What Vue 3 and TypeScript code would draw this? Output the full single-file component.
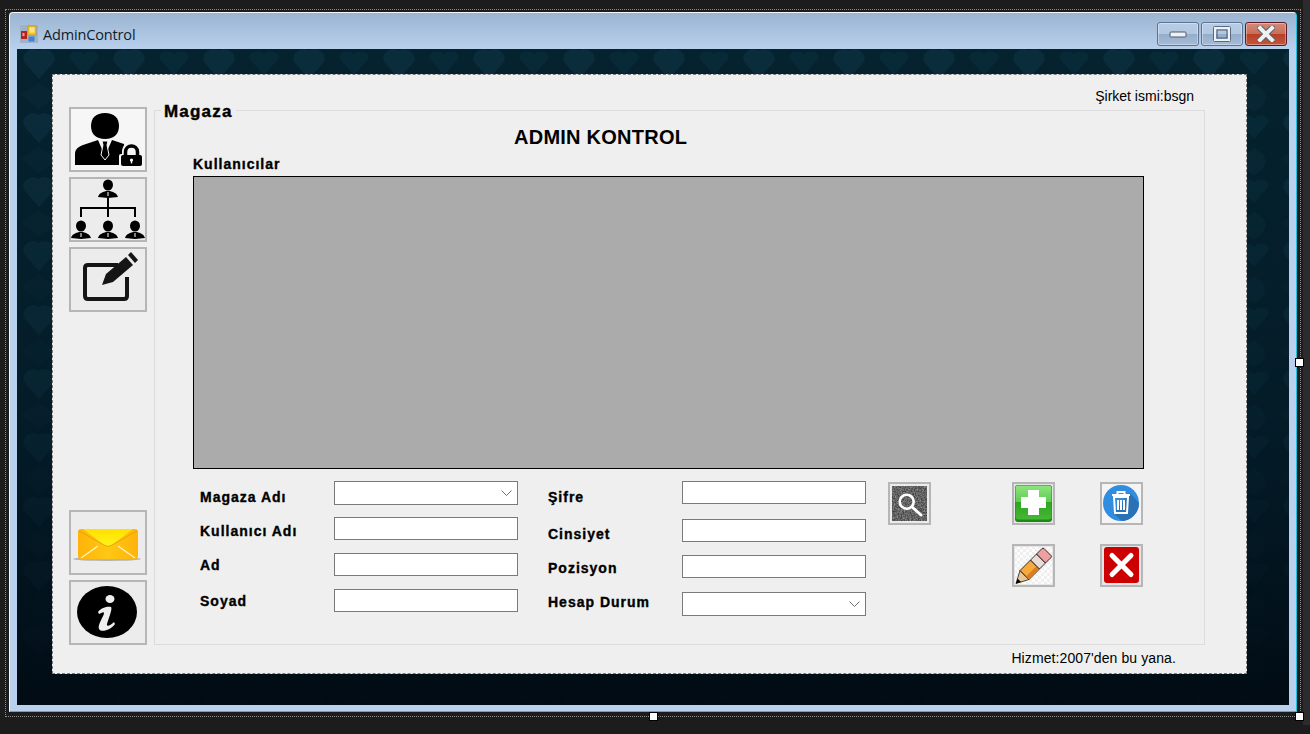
<script setup lang="ts">
interface Field {
  label: string
  combo?: boolean
  gap: number
  labelTop: number
  height: number
}

const leftFields: Field[] = [
  { label: 'Magaza Adı', combo: true, gap: 0, labelTop: 8, height: 24 },
  { label: 'Kullanıcı Adı', gap: 12, labelTop: 6, height: 23 },
  { label: 'Ad', gap: 13, labelTop: 4, height: 23 },
  { label: 'Soyad', gap: 13, labelTop: 4, height: 23 },
]

const rightFields: Field[] = [
  { label: 'Şifre', gap: 0, labelTop: 8, height: 23 },
  { label: 'Cinsiyet', gap: 14, labelTop: 7, height: 23 },
  { label: 'Pozisyon', gap: 13, labelTop: 5, height: 23 },
  { label: 'Hesap Durum', combo: true, gap: 14, labelTop: 2, height: 24 },
]

const columns = [leftFields, rightFields]
</script>

<template>
  <div class="screen">
    <div class="surface">
      <div class="frame">
        <div class="window">
          <div class="titlebar">
            <svg class="app-icon" width="18" height="18" viewBox="0 0 18 18">
              <rect width="18" height="18" fill="#9fb2c8" />
              <rect x="1" y="6" width="6" height="8" fill="#b3241c" />
              <rect x="2.500" y="8" width="2" height="3" fill="#e8a0a0" />
              <rect x="8" y="1" width="8" height="9" fill="#f4c430" stroke="#b98a10" stroke-width="0.6" />
              <rect x="9.500" y="2.500" width="5" height="5" fill="#fbe690" />
              <rect x="8.500" y="11.500" width="6" height="5" fill="#3f82d8" />
            </svg>
            <span class="app-title">AdminControl</span>
            <div class="caption">
              <div class="cap-btn">
                <svg width="18" height="8" viewBox="0 0 18 8"><rect x="1" y="2" width="16" height="5" rx="1" fill="#eef1f5" stroke="#4a5a70" /></svg>
              </div>
              <div class="cap-btn">
                <svg width="18" height="16" viewBox="0 0 18 16"><rect x="1.500" y="1.500" width="15" height="13" rx="1" fill="none" stroke="#eef1f5" stroke-width="3" /><rect x="4" y="4" width="10" height="8" fill="none" stroke="#4a5a70" /><rect x="0.500" y="0.500" width="17" height="15" rx="1" fill="none" stroke="#5a6a80" /></svg>
              </div>
              <div class="cap-btn close">
                <svg width="18" height="16" viewBox="0 0 18 16"><path d="M3 2 L15 14 M15 2 L3 14" stroke="#55606a" stroke-width="6" stroke-linecap="square" /><path d="M3 2 L15 14 M15 2 L3 14" stroke="#eef0f2" stroke-width="4" stroke-linecap="square" /></svg>
              </div>
            </div>
          </div>

          <div class="client">
            <svg class="wallpaper" width="1272" height="656">
              <defs>
                <pattern id="hearts" width="90" height="64" patternUnits="userSpaceOnUse">
                  <path d="M22 2 C30 -4 42 6 36 14 L22 30 L8 14 C2 6 14 -4 22 2Z" fill="#2a6f90" opacity="0.14" />
                  <path d="M67 26 L53 10 C50 4 62 -1 67 6 C72 -1 84 4 81 10Z" fill="#2a6f90" opacity="0.1" />
                  <path d="M22 60 L4 46 L22 34 L40 46Z" fill="#2a6f90" opacity="0.05" />
                  <path d="M67 62 C58 58 52 50 58 42 C62 38 65 38 67 34 C69 38 72 38 76 42 C82 50 76 58 67 62Z" fill="#2a6f90" opacity="0.07" />
                </pattern>
                <linearGradient id="fade" x1="0" y1="0" x2="0" y2="1">
                  <stop offset="0" stop-color="#01111c" stop-opacity="0" />
                  <stop offset="0.55" stop-color="#01111c" stop-opacity="0.35" />
                  <stop offset="1" stop-color="#010a12" stop-opacity="0.95" />
                </linearGradient>
              </defs>
              <rect width="1272" height="656" fill="#05222f" />
              <rect width="1272" height="656" fill="url(#hearts)" />
              <rect width="1272" height="656" fill="url(#fade)" />
            </svg>

            <div class="panel">
              <div class="company">Şirket ismi:bsgn</div>

              <div class="main">
                <div class="sidebar">
                  <div class="side-group">
                    <div class="side-btn light">
                      <svg width="74" height="61" viewBox="2 2 74 61">
                        <path d="M36 6 C45 6 50 11 50 19 C50 27 45 32 36 32 C27 32 22 27 22 19 C22 11 27 6 36 6Z" fill="#000" />
                        <path d="M6 58 V47 C6 41 11 39 17 37 L29 33 L36 49 L43 33 L55 37 L57 58Z" fill="#000" />
                        <path d="M33 34 H39 L38 38 L40 48 L36 53 L32 48 L34 38Z" fill="#000" stroke="#f6f6f6" stroke-width="1" />
                        <rect x="50" y="47" width="25" height="15" rx="2" fill="#f6f6f6" />
                        <path d="M56 48 V45 C56 35 70 35 70 45 V48" fill="none" stroke="#f6f6f6" stroke-width="6" />
                        <path d="M56.500 49 V45 C56.500 37 68.500 37 68.500 45 V49" fill="none" stroke="#000" stroke-width="3.500" />
                        <rect x="52" y="48" width="21" height="11" rx="2" fill="#000" />
                        <circle cx="62.500" cy="53" r="1.600" fill="#fff" />
                        <rect x="61.800" y="53" width="1.400" height="3.400" fill="#fff" />
                      </svg>
                    </div>
                    <div class="side-btn">
                      <svg width="74" height="61" viewBox="2 2 74 61">
                        <path d="M39 21 V40 M12 40 V31 H66 V40" fill="none" stroke="#000" stroke-width="2" />
                        <g v-for="p in [[39, 8], [12, 49], [39, 49], [66, 49]]" :key="p.join()">
                          <ellipse :cx="p[0]" :cy="p[1]" rx="5" ry="5.500" fill="#000" />
                          <path :d="`M${p[0] - 10} ${p[1] + 12} C${p[0] - 9} ${p[1] + 8} ${p[0] - 5} ${p[1] + 7} ${p[0] - 2} ${p[1] + 6} H${p[0] + 2} C${p[0] + 5} ${p[1] + 7} ${p[0] + 9} ${p[1] + 8} ${p[0] + 10} ${p[1] + 12} L${p[0]} ${p[1] + 13}Z`" fill="#000" />
                          <path :d="`M${p[0] - 0.6} ${p[1] + 7} H${p[0] + 0.6} V${p[1] + 11} H${p[0] - 0.6}Z`" fill="#d8d8d8" />
                        </g>
                      </svg>
                    </div>
                    <div class="side-btn">
                      <svg width="74" height="61" viewBox="2 2 74 61">
                        <path d="M49 18 H19 Q16 18 16 21 V49 Q16 52 19 52 H55 Q58 52 58 49 V30" fill="none" stroke="#151515" stroke-width="4" />
                        <path d="M33 38 L37 27 L57 10 L64 18 L44 35Z" fill="#151515" />
                        <path d="M59 8 L62 5 L69 13 L66 16Z" fill="#151515" />
                      </svg>
                    </div>
                  </div>
                  <div class="side-group">
                    <div class="side-btn">
                      <svg width="74" height="61" viewBox="2 2 74 61">
                        <defs>
                          <linearGradient id="mail" x1="0" y1="0" x2="1" y2="0">
                            <stop offset="0" stop-color="#ffb30a" />
                            <stop offset="0.5" stop-color="#ffc814" />
                            <stop offset="1" stop-color="#ffb30a" />
                          </linearGradient>
                          <linearGradient id="flap" x1="0" y1="0" x2="0" y2="1">
                            <stop offset="0" stop-color="#ffe000" />
                            <stop offset="1" stop-color="#fff41a" />
                          </linearGradient>
                        </defs>
                        <ellipse cx="38" cy="49" rx="34" ry="2" fill="#9a9a9a" opacity="0.7" />
                        <rect x="9" y="19" width="60" height="30" rx="3" fill="url(#mail)" />
                        <path d="M14 19 H64 L44 34 Q39 38 34 34Z" fill="url(#flap)" />
                        <path d="M10 21 L35 35 Q39 38 43 35 L68 21" fill="none" stroke="#e0a000" stroke-width="0.8" />
                        <path d="M12 48 L29 36 M66 48 L49 36" stroke="#fff5c8" stroke-width="1.200" />
                      </svg>
                    </div>
                    <div class="side-btn">
                      <svg width="74" height="61" viewBox="2 2 74 61">
                        <ellipse cx="38" cy="32" rx="30" ry="26" fill="#000" />
                        <ellipse cx="41" cy="19" rx="4.500" ry="4" fill="#efefef" />
                        <path d="M29 32 C32 27 40 26 42 27 C44 29 38 42 38 45 C38 47 42 45 45 42 L46 44 C42 50 32 53 30 49 C28 45 35 36 35 33 C35 31 32 33 30 34Z" fill="#efefef" />
                      </svg>
                    </div>
                  </div>
                </div>

                <div class="group">
                  <div class="legend">Magaza</div>
                  <div class="heading">ADMIN KONTROL</div>
                  <div class="users-label">Kullanıcılar</div>
                  <div class="grid-view"></div>

                  <div class="form">
                    <div v-for="(col, i) in columns" :key="i" class="form-col">
                      <div
                        v-for="f in col"
                        :key="f.label"
                        class="row"
                        :style="{ marginTop: f.gap + 'px' }"
                      >
                        <span class="label" :style="{ paddingTop: f.labelTop + 'px' }">{{ f.label }}</span>
                        <div class="input" :style="{ height: f.height + 'px' }">
                          <svg v-if="f.combo" width="11" height="6" viewBox="0 0 11 6">
                            <path d="M0.500 0.500 L5.500 5.500 L10.500 0.500" fill="none" stroke="#707070" />
                          </svg>
                        </div>
                      </div>
                    </div>

                    <div class="actions">
                      <div class="act-btn">
                        <svg width="39" height="39" viewBox="0 0 39 39">
                          <filter id="noise"><feTurbulence type="fractalNoise" baseFrequency="0.7" numOctaves="2" /><feColorMatrix values="0 0 0 0 1 0 0 0 0 1 0 0 0 0 1 0.8 0 0 0 -0.2" /></filter>
                          <rect x="2" y="2" width="35" height="35" fill="#3c3c3c" />
                          <rect x="2" y="2" width="35" height="35" filter="url(#noise)" />
                          <circle cx="16.700" cy="17.700" r="7" fill="none" stroke="#fff" stroke-width="2.600" />
                          <path d="M22 23 L31 31" stroke="#fff" stroke-width="3" stroke-linecap="round" />
                        </svg>
                      </div>
                      <div class="act-btn">
                        <svg width="39" height="39" viewBox="0 0 39 39">
                          <defs>
                            <linearGradient id="green" x1="0" y1="0" x2="0" y2="1">
                              <stop offset="0" stop-color="#8ee57e" />
                              <stop offset="0.48" stop-color="#5ecb50" />
                              <stop offset="0.5" stop-color="#2fa521" />
                              <stop offset="1" stop-color="#45b835" />
                            </linearGradient>
                          </defs>
                          <rect x="1" y="1" width="37" height="37" rx="3" fill="#1e8a14" />
                          <rect x="1.500" y="1.500" width="36" height="34" rx="3" fill="url(#green)" />
                          <path d="M14 6 H25 V13 H32 V24 H25 V31 H14 V24 H7 V13 H14Z" fill="#fff" />
                        </svg>
                      </div>
                      <div class="act-btn">
                        <svg width="39" height="39" viewBox="0 0 39 39">
                          <rect width="39" height="39" fill="#f4f4f4" />
                          <circle cx="19" cy="19" r="18" fill="#318de0" />
                          <path d="M31.700 31.800 A18 18 0 0 0 37 19 L28 9 L11 29 L20 37 A18 18 0 0 0 31.700 31.800Z" fill="#2b71b5" />
                          <path d="M10 11 H28 M15.500 11 V8 H22.500 V11" fill="none" stroke="#fff" stroke-width="2" />
                          <path d="M12 13 H26 L25 29 H13Z" fill="none" stroke="#fff" stroke-width="2" />
                          <path d="M16 16 V26 M19 16 V26 M22 16 V26" stroke="#fff" stroke-width="2" />
                        </svg>
                      </div>
                      <div class="act-btn pencil">
                        <svg width="39" height="39" viewBox="0 0 39 39">
                          <defs>
                            <pattern id="check" width="6" height="6" patternUnits="userSpaceOnUse">
                              <rect width="6" height="6" fill="#fcfcfc" />
                              <rect width="3" height="3" fill="#efefef" />
                              <rect x="3" y="3" width="3" height="3" fill="#efefef" />
                            </pattern>
                          </defs>
                          <rect x="1" y="1" width="37" height="37" fill="url(#check)" />
                          <path d="M2 37.500 L6 24.500 L15 33.500Z" fill="#e9c79a" stroke="#000" stroke-width="0.7" />
                          <path d="M2 37.500 L3.500 32.500 L7 36Z" fill="#000" />
                          <path d="M6 24.500 L16.500 14 L25.500 23 L15 33.500Z" fill="#f9a83c" stroke="#000" stroke-width="0.8" />
                          <path d="M15 33.500 L25.500 23 L22.500 20 L12 30.500Z" fill="#d97f20" />
                          <path d="M16.500 14 L22.500 8 L31.500 17 L25.500 23Z" fill="#e8dcd8" stroke="#000" stroke-width="0.8" />
                          <path d="M22.500 8 L28 2.500 Q29 1.700 30 2.500 L37 9.500 Q37.800 10.500 37 11.500 L31.500 17Z" fill="#eda0a0" stroke="#000" stroke-width="0.8" />
                        </svg>
                      </div>
                      <div class="act-btn cancel">
                        <svg width="39" height="39" viewBox="0 0 39 39">
                          <rect x="2" y="1" width="35" height="36" rx="3" fill="#cc0000" />
                          <path d="M10 9.500 L29 28.500 M29 9.500 L10 28.500" stroke="#fff" stroke-width="5" stroke-linecap="round" />
                        </svg>
                      </div>
                    </div>
                  </div>
                </div>
              </div>

              <div class="service">Hizmet:2007'den bu yana.</div>
            </div>
          </div>
        </div>

        <span class="handle right"></span>
        <span class="handle bottom"></span>
        <span class="handle corner"></span>
      </div>
    </div>
    <div class="scrollbar"></div>
  </div>
</template>

<style>
html,
body {
  margin: 0;
  background: #1c1c1c;
  overflow: hidden;
}
</style>

<style scoped>
.screen {
  display: flex;
  width: 1310px;
  height: 734px;
  background: #1c1c1c;
  font-family: "Liberation Sans", Arial, sans-serif;
  color: #000;
  overflow: hidden;
}

.surface {
  width: 1303px;
  padding: 9px 0 0 5px;
  box-sizing: border-box;
}

.scrollbar {
  width: 7px;
  height: 725px;
  background: #2c2c2e;
}

.frame {
  position: relative;
  width: 1296px;
  height: 708px;
  box-sizing: border-box;
  border: 1px dotted #8c8c8c;
  padding: 2px 3px 4px 3px;
}

.window {
  width: 1288px;
  height: 700px;
  box-sizing: border-box;
  display: flex;
  flex-direction: column;
  align-items: center;
  border-top: 1px solid #f4f7fb;
  border-left: 1px solid #f4f7fb;
  border-right: 1px solid #19c4dc;
  border-bottom: 1px solid #19c4dc;
  border-radius: 4px 4px 0 0;
  background: linear-gradient(#9bb4d1, #b9d1ec 37px);
}

.titlebar {
  width: 100%;
  height: 36px;
  flex: none;
  display: flex;
  align-items: flex-start;
  box-sizing: border-box;
  padding: 0 9px 0 10px;
}

.app-icon {
  margin-top: 12px;
}

.app-title {
  margin: 12px 0 0 5px;
  font-family: "Open Sans", sans-serif;
  font-size: 14.5px;
  line-height: 20px;
  letter-spacing: -0.15px;
  color: #101c2c;
}

.caption {
  margin-left: auto;
  margin-top: 9px;
  display: flex;
  gap: 2px;
}

.cap-btn {
  width: 42px;
  height: 24px;
  box-sizing: border-box;
  border: 1px solid #5d7391;
  border-radius: 3px;
  box-shadow: inset 0 0 0 1px rgba(255, 255, 255, 0.35);
  background: linear-gradient(#b7cde6 0, #b2c8e1 48%, #95adc9 50%, #a4bcd8 100%);
  display: flex;
  align-items: center;
  justify-content: center;
}

.cap-btn.close {
  border-color: #5e1a2a;
  background: linear-gradient(#d58a78 0, #c96f5a 48%, #b83f25 50%, #c2563e 100%);
}

.client {
  position: relative;
  width: 1272px;
  height: 656px;
  flex: none;
  box-sizing: border-box;
  padding: 25px 0 0 35px;
}

.wallpaper {
  position: absolute;
  top: 0;
  left: 0;
}

.panel {
  position: relative;
  width: 1195px;
  height: 600px;
  box-sizing: border-box;
  border: 1px dashed #7d7d7d;
  background: #efefef;
  display: flex;
  flex-direction: column;
}

.company {
  height: 32px;
  flex: none;
  box-sizing: border-box;
  padding: 14px 52px 0 0;
  text-align: right;
  font-size: 14px;
  line-height: 15px;
}

.main {
  display: flex;
  height: 538px;
  flex: none;
  padding-left: 16px;
  gap: 7px;
}

.sidebar {
  width: 78px;
  display: flex;
  flex-direction: column;
  justify-content: space-between;
}

.side-group {
  display: flex;
  flex-direction: column;
  gap: 5px;
}

.side-btn {
  width: 78px;
  height: 65px;
  box-sizing: border-box;
  border: 2px solid #b6b6b6;
  background: #ececec;
  display: flex;
}

.side-btn.light {
  background: #f6f6f6;
}

.group {
  position: relative;
  width: 1051px;
  height: 535px;
  margin-top: 3px;
  box-sizing: border-box;
  border: 1px solid #dcdcdc;
  padding-left: 38px;
}

.legend {
  position: absolute;
  top: -9px;
  left: 6px;
  padding: 0 3px;
  background: #efefef;
  font-size: 17px;
  font-weight: 700;
  line-height: 20px;
  letter-spacing: 1.2px;
  -webkit-text-stroke: 0.4px #000;
}

.heading {
  margin: 15px 0 0 321px;
  font-size: 20px;
  font-weight: 700;
  line-height: 22px;
  letter-spacing: 0.25px;
}

.users-label {
  margin-top: 9px;
  font-size: 14px;
  font-weight: 700;
  line-height: 14px;
  height: 14px;
  letter-spacing: 1px;
  -webkit-text-stroke: 0.35px #000;
}

.grid-view {
  margin-top: 5px;
  width: 951px;
  height: 293px;
  box-sizing: border-box;
  border: 1px solid #000;
  background: #ababab;
}

.form {
  display: flex;
  margin: 12px 0 0 7px;
  gap: 30px;
}

.form-col {
  width: 318px;
}

.row {
  display: flex;
}

.label {
  width: 134px;
  flex: none;
  box-sizing: border-box;
  font-size: 14px;
  font-weight: 700;
  line-height: 16px;
  letter-spacing: 1px;
  -webkit-text-stroke: 0.35px #000;
}

.input {
  width: 184px;
  box-sizing: border-box;
  border: 1px solid #7a7a7a;
  background: #fff;
  display: flex;
  align-items: center;
  justify-content: flex-end;
  padding-right: 5px;
}

.actions {
  display: grid;
  grid-template-columns: 124px 88px 43px;
  grid-template-rows: 62px 43px;
  margin: 1px 0 0 -8px;
}

.act-btn {
  width: 43px;
  height: 43px;
  box-sizing: border-box;
  border: 2px solid #b6b6b6;
  background: #e6e6e6;
  display: flex;
}

.act-btn.pencil {
  grid-column: 2;
  grid-row: 2;
}

.act-btn.cancel {
  grid-column: 3;
  grid-row: 2;
}

.service {
  padding: 6px 70px 0 0;
  text-align: right;
  font-size: 14px;
  line-height: 15px;
  letter-spacing: 0.1px;
}

.handle {
  position: absolute;
  width: 7px;
  height: 7px;
  background: #fff;
  outline: 1px solid #000;
}

.handle.right {
  left: 1290px;
  top: 349px;
}

.handle.bottom {
  left: 644px;
  top: 703px;
}

.handle.corner {
  left: 1290px;
  top: 703px;
}
</style>
